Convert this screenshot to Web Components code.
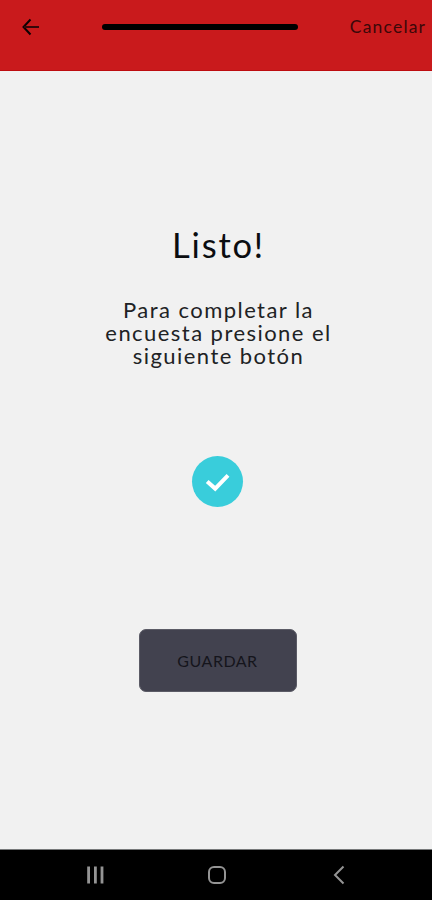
<!DOCTYPE html>
<html lang="es">
<head>
  <meta charset="UTF-8">
  <meta name="viewport" content="width=device-width, initial-scale=1.0">
  <title>Encuesta</title>
  <style>
    body {
      margin: 0;
      height: 100vh;
      overflow: hidden;
      font-family: Lato, "Open Sans", sans-serif;
      color: #0b0d10;
    }
  </style>
</head>
<body>
  <survey-screen></survey-screen>

  <script>
    class SurveyHeader extends HTMLElement {
      constructor() {
        super();
        this.shadowDOM = this.attachShadow({ mode: "open" });
      }

      connectedCallback() {
        this.render();
      }

      render() {
        this.shadowDOM.innerHTML = `
        <style>
          :host {
            display: grid;
            grid-template-columns: 102px 196px 1fr;
            align-items: center;
            box-sizing: border-box;
            height: 71px;
            padding-bottom: 17px;
            background-color: #c91a1c;
            border-bottom: 1px solid #bd0c10;
          }

          svg {
            display: block;
            margin-left: 21px;
          }

          .progress {
            height: 6px;
            border-radius: 3px;
            background-color: #000;
          }

          .cancel {
            justify-self: end;
            padding-right: 7px;
            font-size: 17.5px;
            line-height: 22px;
            letter-spacing: 1.2px;
            margin-right: -1.2px;
            color: #3c0809;
          }
        </style>

        <svg width="20" height="20" viewBox="0 0 20 20" fill="none" stroke="#0c0203" stroke-width="2">
          <path d="M9.5 2.5L2.5 10L9.5 17.5" />
          <path d="M3 10H18" stroke="#360709" />
        </svg>
        <div class="progress"></div>
        <span class="cancel"><slot></slot></span>
        `;
      }
    }

    class SurveyMessage extends HTMLElement {
      constructor() {
        super();
        this.shadowDOM = this.attachShadow({ mode: "open" });
      }

      connectedCallback() {
        this.render();
      }

      render() {
        this.shadowDOM.innerHTML = `
        <style>
          :host {
            display: flex;
            flex-direction: column;
            align-items: center;
            padding-left: 2px;
            text-align: center;
          }

          h1 {
            margin: 0 0 32px;
            font-size: 34.5px;
            line-height: 42px;
            font-weight: 400;
            letter-spacing: 1.8px;
          }

          p {
            width: 240px;
            margin: 0;
            font-size: 22px;
            line-height: 23px;
            letter-spacing: 1.45px;
            color: #202224;
          }
        </style>

        <h1>${this.getAttribute("heading")}</h1>
        <p><slot></slot></p>
        `;
      }
    }

    class CheckBadge extends HTMLElement {
      constructor() {
        super();
        this.shadowDOM = this.attachShadow({ mode: "open" });
      }

      connectedCallback() {
        this.render();
      }

      render() {
        this.shadowDOM.innerHTML = `
        <style>
          :host {
            display: flex;
            align-items: center;
            justify-content: center;
            width: 51px;
            height: 51px;
            border-radius: 50%;
            background-color: #39cddb;
          }
        </style>

        <svg width="51" height="51" viewBox="0 0 51 51" fill="none" stroke="#fff" stroke-width="4">
          <path d="M15.2 25.4L23.2 32.6L36 19.4" />
        </svg>
        `;
      }
    }

    class SaveButton extends HTMLElement {
      constructor() {
        super();
        this.shadowDOM = this.attachShadow({ mode: "open" });
      }

      connectedCallback() {
        this.render();
      }

      render() {
        this.shadowDOM.innerHTML = `
        <style>
          :host {
            display: block;
          }

          button {
            display: block;
            box-sizing: border-box;
            width: 158px;
            height: 63px;
            padding: 0;
            border: 1px solid #5b5b66;
            border-radius: 7px;
            background-color: #42424f;
            font-family: inherit;
            font-size: 16px;
            letter-spacing: 0.5px;
            color: #15151c;
          }
        </style>

        <button type="button"><slot></slot></button>
        `;
      }
    }

    class NavigationBar extends HTMLElement {
      constructor() {
        super();
        this.shadowDOM = this.attachShadow({ mode: "open" });
      }

      connectedCallback() {
        this.render();
      }

      render() {
        this.shadowDOM.innerHTML = `
        <style>
          :host {
            display: flex;
            align-items: center;
            justify-content: space-between;
            box-sizing: border-box;
            height: 51px;
            padding: 0 82px 0 84px;
            background-color: #000;
            border-top: 1px solid #77797a;
          }

          svg {
            display: block;
            fill: none;
            stroke: #949494;
            stroke-width: 2;
          }
        </style>

        <svg width="22" height="22" viewBox="0 0 22 22" style="stroke-width: 2.8">
          <path d="M4.6 2.5V19.5M11.4 2.5V19.5M18 2.5V19.5" />
        </svg>
        <svg width="22" height="22" viewBox="0 0 22 22">
          <rect x="3" y="3" width="16" height="16" rx="5" />
        </svg>
        <svg width="22" height="22" viewBox="0 0 22 22">
          <path d="M15.5 2.5L7 11L15.5 19.5" />
        </svg>
        `;
      }
    }

    class SurveyScreen extends HTMLElement {
      constructor() {
        super();
        this.shadowDOM = this.attachShadow({ mode: "open" });
      }

      connectedCallback() {
        this.render();
      }

      render() {
        this.shadowDOM.innerHTML = `
        <style>
          :host {
            display: flex;
            flex-direction: column;
            height: 100vh;
            background-color: #f1f1f1;
          }

          main {
            flex: 1;
            display: flex;
            flex-direction: column;
            align-items: center;
            padding: 153px 0 0 3px;
          }

          check-badge {
            margin-top: 89px;
          }

          save-button {
            margin-top: 122px;
          }
        </style>

        <survey-header>Cancelar</survey-header>
        <main>
          <survey-message heading="Listo!">Para completar la encuesta presione el siguiente botón</survey-message>
          <check-badge></check-badge>
          <save-button>GUARDAR</save-button>
        </main>
        <navigation-bar></navigation-bar>
        `;
      }
    }

    customElements.define("survey-header", SurveyHeader);
    customElements.define("survey-message", SurveyMessage);
    customElements.define("check-badge", CheckBadge);
    customElements.define("save-button", SaveButton);
    customElements.define("navigation-bar", NavigationBar);
    customElements.define("survey-screen", SurveyScreen);
  </script>
</body>
</html>
